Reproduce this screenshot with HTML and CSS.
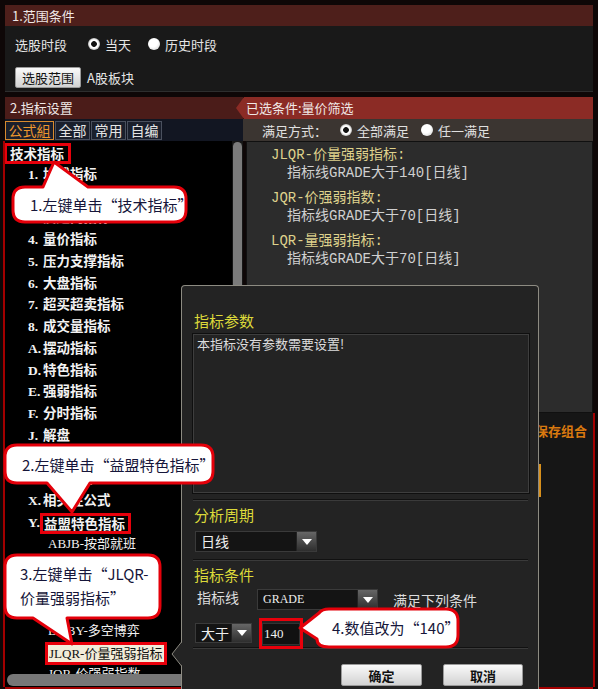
FILE: index.html
```html
<!DOCTYPE html>
<html lang="zh-CN">
  <head>
    <meta charset="UTF-8" />
    <title>条件选股</title>
    <link rel="stylesheet" href="styles.css">
  </head>
  <body>
    <div class="app">
      <section class="scope">
        <div class="bar">1.范围条件</div>
        <div class="scope-body">
          <div class="scope-row">
            <span>选股时段</span>
            <label class="radio on first"><i></i>当天</label>
            <label class="radio"><i></i>历史时段</label>
          </div>
          <div class="scope-row row-two">
            <button class="btn-light">选股范围</button>
            <span class="range-name">A股板块</span>
          </div>
        </div>
      </section>

      <section class="setup">
        <div class="col-left">
          <div class="bar">2.指标设置</div>
          <div class="tabs">
            <span class="tab active">公式組</span>
            <span class="tab">全部</span>
            <span class="tab">常用</span>
            <span class="tab">自编</span>
          </div>
          <div class="tree">
            <ul class="tree-list">
              <li class="l0"><span class="boxed">技术指标</span></li>
              <li class="l1"><span class="num">1.</span>均线指标</li>
              <li class="l1"><span class="num">2.</span>趋向指标</li>
              <li class="l1"><span class="num">3.</span>反趋向指标</li>
              <li class="l1"><span class="num">4.</span>量价指标</li>
              <li class="l1"><span class="num">5.</span>压力支撑指标</li>
              <li class="l1"><span class="num">6.</span>大盘指标</li>
              <li class="l1"><span class="num">7.</span>超买超卖指标</li>
              <li class="l1"><span class="num">8.</span>成交量指标</li>
              <li class="l1"><span class="num">A.</span>摆动指标</li>
              <li class="l1"><span class="num">D.</span>特色指标</li>
              <li class="l1"><span class="num">E.</span>强弱指标</li>
              <li class="l1"><span class="num">F.</span>分时指标</li>
              <li class="l1"><span class="num">J.</span>解盘</li>
              <li class="l1"><span class="num">L.</span>龙虎看盘</li>
              <li class="l1"><span class="num">W.</span>五彩K线</li>
              <li class="l1"><span class="num">X.</span>相关性公式</li>
              <li class="l1"><span class="num">Y.</span><span class="boxed">益盟特色指标</span></li>
              <li class="l2">ABJB-按部就班</li>
              <li class="l2">BDCZ-波段操作</li>
              <li class="l2">CPXZ-操盘选择</li>
              <li class="l2">DDZB-多空指标</li>
              <li class="l2">DKBY-多空博弈</li>
              <li class="l2"><span class="boxed picked">JLQR-价量强弱指标</span></li>
              <li class="l2">JQR-价强弱指数</li>
            </ul>
            <div class="vscroll"><span></span></div>
            <div class="hscroll"><span></span></div>
          </div>
        </div>

        <div class="col-right">
          <div class="bar bar-hot">已选条件:量价筛选</div>
          <div class="mode">
            <span class="mode-label">满足方式：</span>
            <label class="radio on"><i></i>全部满足</label>
            <label class="radio second"><i></i>任一满足</label>
          </div>
          <div class="conds">
            <div class="cond">
              <div class="cond-title">JLQR-价量强弱指标:</div>
              <div class="cond-line">指标线GRADE大于140[日线]</div>
            </div>
            <div class="cond">
              <div class="cond-title">JQR-价强弱指数:</div>
              <div class="cond-line">指标线GRADE大于70[日线]</div>
            </div>
            <div class="cond">
              <div class="cond-title">LQR-量强弱指标:</div>
              <div class="cond-line">指标线GRADE大于70[日线]</div>
            </div>
          </div>
          <div class="save">
            <div class="save-link">保存组合</div>
            <div class="save-edge"></div>
          </div>
        </div>
      </section>

      <div class="dialog">
        <svg class="notch" width="11" height="24" viewBox="0 0 11 24">
          <polygon points="11,0 1,12 11,24" fill="#232323" />
          <path d="M10.5 0 L1 12 L10.5 24" fill="none" stroke="#8d8b82" stroke-width="1" />
        </svg>
        <div class="dlg-h">指标参数</div>
        <div class="param">本指标没有参数需要设置!</div>
        <div class="sep"></div>
        <div class="dlg-h sub">分析周期</div>
        <div class="dd period">
          <span class="dd-text">日线</span>
          <span class="dd-btn"><svg width="10" height="6" viewBox="0 0 10 6"><polygon points="0,0 10,0 5,6" fill="#fff" /></svg></span>
        </div>
        <div class="sep sep-b"></div>
        <div class="dlg-h sub">指标条件</div>
        <div class="cond-row">
          <span class="row-label">指标线</span>
          <div class="dd line-dd">
            <span class="dd-text latin">GRADE</span>
            <span class="dd-btn"><svg width="10" height="6" viewBox="0 0 10 6"><polygon points="0,0 10,0 5,6" fill="#fff" /></svg></span>
          </div>
          <span class="row-note">满足下列条件</span>
        </div>
        <div class="cond-row row-b">
          <div class="dd op-dd">
            <span class="dd-text">大于</span>
            <span class="dd-btn"><svg width="10" height="6" viewBox="0 0 10 6"><polygon points="0,0 10,0 5,6" fill="#fff" /></svg></span>
          </div>
          <span class="hl-input"><input class="num-input" type="text" value="140" readonly /></span>
        </div>
        <div class="sep sep-c"></div>
        <div class="btns">
          <button class="btn-light dlg-btn">确定</button>
          <button class="btn-light dlg-btn">取消</button>
        </div>
      </div>

      <!-- 提示气泡 -->
      <div class="callout c1">
        <svg viewBox="0 0 180 68" width="180" height="68">
          <path d="M15 29 H33 L44 4 L78 29 H164 Q176 29 176 41 V52 Q176 64 164 64 H15 Q3 64 3 52 V41 Q3 29 15 29 Z" />
        </svg>
        <span class="callout-text">1.左键单击“技术指标”</span>
      </div>
      <div class="callout c2">
        <svg viewBox="0 0 212 74" width="212" height="74">
          <path d="M14 3 H198 Q210 3 210 15 V29 Q210 41 198 41 H87 L69 70 L44 41 H14 Q2 41 2 29 V15 Q2 3 14 3 Z" />
        </svg>
        <span class="callout-text">2.左键单击“益盟特色指标”</span>
      </div>
      <div class="callout c3">
        <svg viewBox="0 0 160 96" width="160" height="96">
          <path d="M14 3 H145 Q157 3 157 15 V54 Q157 66 145 66 H64 L69 92 L30 66 H14 Q2 66 2 54 V15 Q2 3 14 3 Z" />
        </svg>
        <span class="callout-text">3.左键单击“JLQR-<br>价量强弱指标”</span>
      </div>
      <div class="callout c4">
        <svg viewBox="0 0 166 46" width="166" height="46">
          <path d="M33 4 H150 Q162 4 162 16 V30 Q162 42 150 42 H33 Q21 42 21 34 L4 23 L23 8 Q26 4 33 4 Z" />
        </svg>
        <span class="callout-text">4.数值改为“140”</span>
      </div>
    </div>
  </body>
</html>
```

FILE: styles.css
```css
html,
body {
  margin: 0;
  padding: 0;
  background-color: #fff;
}

.app {
  position: relative;
  width: 598px;
  height: 689px;
  box-sizing: border-box;
  padding: 5px 3px 0;
  background-color: #0e0707;
  font-family: "Noto Sans CJK SC", sans-serif;
  font-size: 13px;
  color: #e6e6e6;
}

.bar {
  height: 21px;
  line-height: 21px;
  padding-left: 7px;
  background-color: #4e1f1b;
  color: #f0e8e6;
}

/* 1. 范围条件 */
.scope {
  margin: 0 2px;
}

.scope-body {
  height: 66px;
  box-sizing: border-box;
  padding: 8px 10px 0;
  background-color: #191919;
  border-bottom: 1px solid #2e2e2e;
}

.scope-row {
  display: flex;
  align-items: center;
  height: 20px;
}

.row-two {
  height: 22px;
  margin-top: 12px;
}

.radio {
  display: flex;
  align-items: center;
}

.radio i {
  width: 12px;
  height: 12px;
  margin-right: 5px;
  border-radius: 50%;
  background: radial-gradient(circle at 40% 35%, #fff 45%, #c8c8c8 100%);
}

.radio.on i {
  background: radial-gradient(circle, #111 0 2.5px, #fff 3.2px 4.2px, #b8b8b8 6px);
}

.scope .radio.first {
  margin-left: 21px;
}

.scope .radio + .radio {
  margin-left: 17px;
}

.btn-light {
  height: 21px;
  padding: 0 6px;
  border: 1px solid #9a9a9a;
  border-radius: 2px;
  background: linear-gradient(#fafafa, #d2d2d2);
  color: #111;
  font-family: "Noto Sans CJK SC", sans-serif;
  font-size: 13px;
  line-height: 19px;
}

.range-name {
  margin-left: 6px;
}

/* 2. 指标设置 */
.setup {
  display: flex;
  height: 590px;
  margin: 5px 2px 0;
}

.col-left {
  width: 238px;
  display: flex;
  flex-direction: column;
}

.col-left .bar {
  height: 22px;
  line-height: 22px;
  padding-left: 5px;
  background-color: #4b1c19;
}

.tabs {
  display: flex;
  gap: 1px;
  height: 22px;
  box-sizing: border-box;
  padding-top: 2px;
  background-color: #121622;
}

.tab {
  width: 35px;
  height: 19px;
  box-sizing: border-box;
  border: 1px solid #4a505e;
  background-color: #1a1f2c;
  color: #e4e4e4;
  font-size: 14px;
  line-height: 16px;
  text-align: center;
}

.tab.active {
  width: 49px;
  border-color: #d88a2e;
  color: #ec962e;
}

.tree {
  flex: 1;
  display: grid;
  grid-template-columns: 1fr 11px;
  grid-template-rows: 1fr 13px;
  min-height: 0;
  background-color: #000;
  box-shadow: -2px 0 0 #a30000, 0 2px 0 #a30000;
}

.tree-list {
  margin: 0;
  padding: 0;
  list-style: none;
  overflow: hidden;
  white-space: nowrap;
}

.tree-list li {
  height: 21.75px;
  line-height: 21.75px;
  font-size: 13.5px;
  font-weight: bold;
  color: #f2f2f2;
}

.tree-list .l0 {
  padding-left: 0;
}

.tree-list .l1 {
  padding-left: 23px;
}

.tree-list .l2 {
  padding-left: 43px;
  font-family: "Liberation Serif", "Noto Sans CJK SC", serif;
  font-weight: normal;
  font-size: 13px;
}

.num {
  display: inline-block;
  width: 15px;
  font-family: "Liberation Serif", serif;
}

.boxed {
  display: inline-block;
  margin-left: -3px;
  padding: 0 3px 0 1px;
  border: 3px solid #e8000b;
  line-height: 15px;
  vertical-align: middle;
}

.l0 .boxed {
  margin-left: -1px;
  padding: 0 4px 0 3px;
}

.boxed.picked {
  padding: 1px 2px 1px 1px;
  background-color: #f2ecd9;
  color: #111;
}

.vscroll {
  grid-row: 1 / 3;
  grid-column: 2;
  padding: 1px 1px 0;
  background-color: #161616;
}

.vscroll span {
  display: block;
  height: 300px;
  border-radius: 5px 5px 0 0;
  background-color: #7b7b7b;
}

.hscroll {
  padding: 0 0 1px 2px;
}

.hscroll span {
  display: block;
  height: 12px;
  border-radius: 6px 0 0 6px;
  background-color: #777;
}

.col-right {
  flex: 1;
  display: flex;
  flex-direction: column;
}

.bar-hot {
  height: 22px;
  line-height: 22px;
  margin-left: -7px;
  padding-left: 10px;
  background-color: #8b2b25;
  clip-path: polygon(0 50%, 8px 0, 100% 0, 100% 100%, 8px 100%);
}

.mode {
  display: flex;
  align-items: center;
  height: 22px;
  padding-left: 19px;
  background-color: #3b3531;
  color: #e0e0e0;
}

.mode-label {
  width: 78px;
}

.mode .radio.second {
  margin-left: 12px;
}

.conds {
  height: 272px;
  box-sizing: border-box;
  margin-left: 3px;
  padding: 5px 0 0 24px;
  background-color: #2c2c2c;
  border: 1px solid #101010;
  font-family: "Liberation Mono", "Noto Sans CJK SC", monospace;
  font-size: 14px;
}

.cond {
  margin-bottom: 8px;
}

.cond-title {
  line-height: 17px;
  color: #dfd28c;
}

.cond-line {
  line-height: 18px;
  padding-left: 16px;
  color: #d0d0d0;
}

.save {
  flex: 1;
  background-color: #161616;
  box-shadow: 2px 0 0 #a30000, 0 2px 0 #a30000;
}

.save-link {
  padding: 8px 6px 0 0;
  line-height: 20px;
  text-align: right;
  font-weight: bold;
  color: #d9790f;
}

.save-edge {
  width: 2px;
  height: 33px;
  margin: 23px 0 0 296px;
  background-color: #d8901c;
}

/* 指标参数弹窗 */
.dialog {
  position: absolute;
  left: 181px;
  top: 285px;
  width: 358px;
  height: 408px;
  box-sizing: border-box;
  padding: 0 10px 0 11px;
  background-color: #232323;
  border: 1px solid #8d8b82;
  border-bottom: none;
  border-radius: 4px 4px 0 0;
}

.notch {
  position: absolute;
  left: -11px;
  top: 356px;
}

.dlg-h {
  height: 18px;
  margin-top: 26px;
  padding-left: 1px;
  line-height: 18px;
  font-size: 15px;
  color: #dcd93a;
}

.dlg-h.sub {
  margin-top: 5px;
}

.param {
  width: 336px;
  height: 159px;
  box-sizing: border-box;
  margin-top: 4px;
  padding: 0 3px;
  border: 1px solid #3e3e3e;
  outline: 1px solid #0f0f0f;
  line-height: 17px;
  color: #dcdcdc;
}

.sep {
  margin-top: 6px;
  border-top: 1px solid #111;
  border-bottom: 1px solid #3a3a3a;
}

.sep-b {
  margin-top: 7px;
}

.sep-c {
  margin-top: 3px;
}

.dd {
  display: flex;
  height: 21px;
  box-sizing: border-box;
  border: 1px solid #3a3a3a;
  background-color: #141414;
}

.dd.period {
  width: 122px;
  margin: 7px 0 0 2px;
}

.dd-text {
  flex: 1;
  padding-left: 5px;
  line-height: 19px;
  font-size: 14px;
  color: #eee;
}

.dd-text.latin {
  font-family: "Liberation Serif", serif;
  font-size: 12px;
}

.dd-btn {
  display: flex;
  align-items: center;
  justify-content: center;
  width: 19px;
  background: linear-gradient(#666, #2e2e2e);
  border-left: 1px solid #222;
}

.cond-row {
  display: flex;
  align-items: center;
  height: 21px;
  margin-top: 5px;
}

.row-label {
  align-self: flex-start;
  width: 64px;
  padding-left: 4px;
  box-sizing: border-box;
  line-height: 17px;
  font-size: 14px;
  color: #dcdcdc;
}

.line-dd {
  width: 121px;
}

.row-note {
  margin-left: 15px;
  font-size: 14px;
  color: #dcdcdc;
}

.row-b {
  height: 22px;
  margin-top: 12px;
}

.op-dd {
  width: 57px;
  height: 20px;
  margin-left: 2px;
}

.hl-input {
  display: flex;
  margin-left: 7px;
  padding: 2px 0 1px;
  border: 3px solid #e8000b;
}

.num-input {
  width: 38px;
  height: 22px;
  box-sizing: border-box;
  padding: 0 0 0 1px;
  border: 1px solid #333;
  background-color: #111;
  color: #f0f0f0;
  font-family: "Liberation Serif", serif;
  font-size: 13px;
}

.btns {
  display: flex;
  gap: 21px;
  margin-top: 15px;
  padding-left: 148px;
}

.dlg-btn {
  width: 81px;
  height: 22px;
  font-weight: bold;
}

.dlg-btn + .dlg-btn {
  width: 80px;
}

/* 提示气泡 */
.callout {
  position: absolute;
  box-sizing: border-box;
  color: #16163a;
  font-size: 15px;
  line-height: 20px;
  white-space: nowrap;
}

.callout svg {
  position: absolute;
  left: 0;
  top: 0;
}

.callout path {
  fill: #fff;
  stroke: #e4000a;
  stroke-width: 3;
  stroke-linejoin: round;
}

.callout-text {
  position: relative;
  display: block;
}

.c1 {
  left: 10px;
  top: 158px;
  width: 180px;
  height: 68px;
  padding: 37px 0 0 20px;
}

.c2 {
  left: 3px;
  top: 442px;
  width: 212px;
  height: 74px;
  padding: 13px 0 0 19px;
}

.c3 {
  left: 3px;
  top: 552px;
  width: 160px;
  height: 96px;
  padding: 10px 0 0 17px;
  line-height: 24px;
}

.c4 {
  left: 296px;
  top: 605px;
  width: 166px;
  height: 46px;
  padding: 13px 0 0 36px;
}
```
